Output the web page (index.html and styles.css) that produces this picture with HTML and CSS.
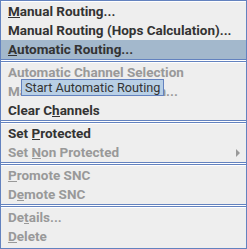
FILE: index.html
```html
<html>

<head>
    <link rel="stylesheet" href="styles.css">
</head>

<body>
    <div class="popup">
        <div class="item"><u>M</u>anual Routing...</div>
        <div class="item">Manual Routing (Hops Calculation)...</div>
        <div class="item selected"><u>A</u>utomatic Routing...</div>
        <div class="sep"></div>
        <div class="item off">Automatic Channel Selection</div>
        <div class="item off">Manual Channel Selection...</div>
        <div class="item">Clear C<u>h</u>annels</div>
        <div class="sep"></div>
        <div class="item">Set <u>P</u>rotected</div>
        <div class="item off sub">Set <u>N</u>on Protected<span class="arrow"></span></div>
        <div class="sep"></div>
        <div class="item off"><u>P</u>romote SNC</div>
        <div class="item off">D<u>e</u>mote SNC</div>
        <div class="sep"></div>
        <div class="item off">De<u>t</u>ails...</div>
        <div class="item off"><u>D</u>elete</div>

        <div class="tooltip">Start Automatic Routing</div>
    </div>
</body>

</html>
```

FILE: styles.css
```css
body {
    margin: 0;
    background: #eeeeee;
}

.popup {
    position: relative;
    width: 245px;
    height: 246px;
    padding-top: 1px;
    border: 1px solid #6382bf;
    background: #eeeeee;
    box-shadow: inset 0 1px 0 #ffffff;
    font-family: Roboto, sans-serif;
    font-weight: bold;
    font-size: 13.5px;
    color: #333333;
}

.item {
    position: relative;
    height: 19px;
    line-height: 19px;
    padding-left: 7px;
    white-space: nowrap;
}

.item u {
    text-decoration: none;
    border-bottom: 1px solid currentColor;
    line-height: 12px;
    display: inline-block;
}

.selected {
    background: #a3b8cc;
}

.off {
    color: #999999;
}

.sep {
    height: 4px;
    box-sizing: border-box;
    border-top: 2px solid transparent;
    background: linear-gradient(#6382bf 0 1px, #ffffff 1px 2px, transparent 2px);
}

.arrow {
    position: absolute;
    right: 6px;
    top: 6px;
    width: 0;
    height: 0;
    border-top: 4px solid transparent;
    border-bottom: 4px solid transparent;
    border-left: 4px solid #999999;
}

.tooltip {
    position: absolute;
    left: 20px;
    top: 78px;
    height: 15px;
    line-height: 15px;
    padding: 0 3px;
    border: 1px solid #6382bf;
    background: #b8cfe5;
    color: #333333;
    font-weight: normal;
    font-size: 12.7px;
}
```
